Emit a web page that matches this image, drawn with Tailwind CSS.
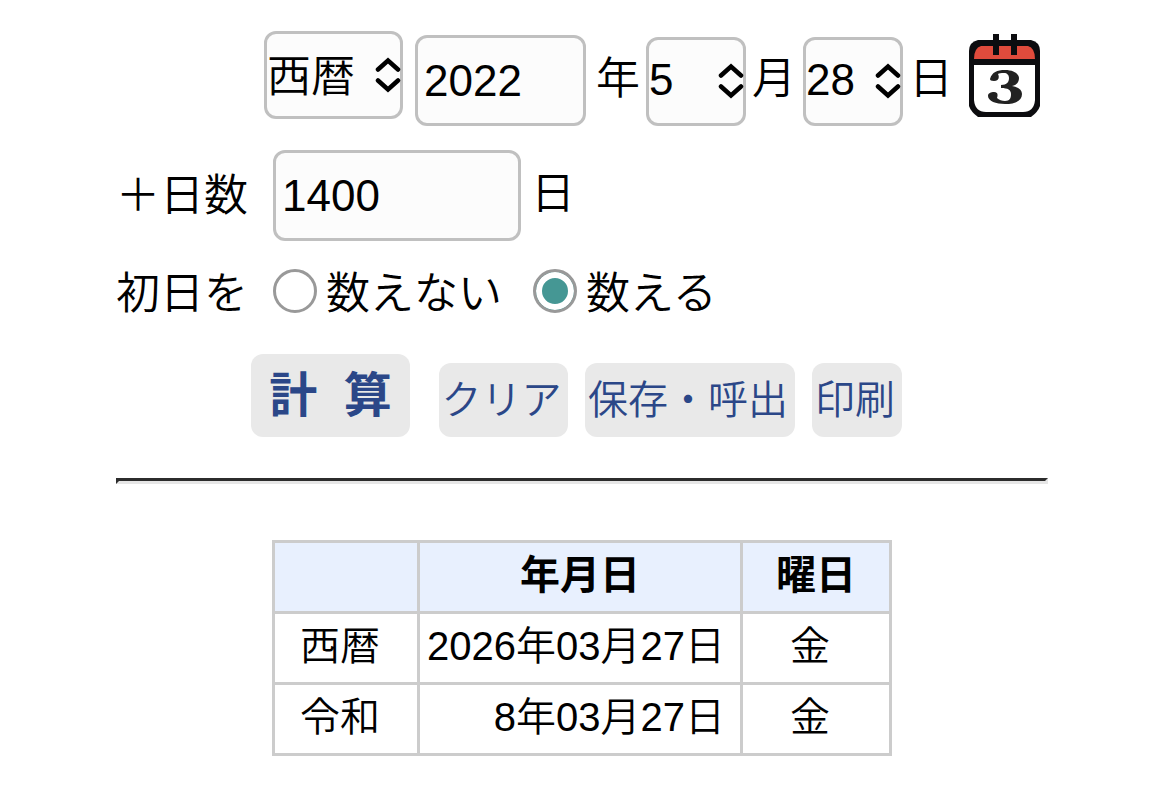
<!DOCTYPE html>
<html lang="ja">
<head>
<meta charset="utf-8">
<title>日付計算</title>
<script src="https://cdn.jsdelivr.net/npm/@tailwindcss/browser@4"></script>
</head>
<body class="bg-white font-['Liberation_Sans','Noto_Sans_CJK_JP',sans-serif] font-[350] text-black">
<main class="pt-[31px] pr-[122px] pb-12 pl-[116px]">
<form class="text-[44px] leading-[88px]">
  <div class="flex items-start pl-[148px]">
    <div class="relative">
      <select aria-label="暦" class="block h-[88px] w-[139px] appearance-none rounded-xl border-3 border-[#c0c0c0] bg-[#fcfcfc] pt-1 leading-[60px]"><option>西暦</option></select>
      <svg class="pointer-events-none absolute top-[26px] right-0.5" width="26" height="36" viewBox="0 0 26 36" fill="none" stroke="#000" stroke-width="4.500" stroke-linecap="round" stroke-linejoin="miter"><path d="M3 12.500 13 3.500 23 12.500M3 23.500 13 32.500 23 23.500"/></svg>
    </div>
    <input type="text" aria-label="年" value="2022" class="mt-1 ml-3 block h-[91px] w-[171px] rounded-xl border-3 border-[#c0c0c0] bg-[#fcfcfc] px-1.5">
    <span class="mt-1 ml-2.5 w-12">年</span>
    <div class="relative mt-1.5 ml-0.5">
      <select aria-label="月" class="block h-[89px] w-[100px] appearance-none rounded-xl border-3 border-[#c0c0c0] bg-[#fcfcfc] pb-1 leading-[60px]"><option>5</option></select>
      <svg class="pointer-events-none absolute top-[26px] right-0.5" width="26" height="36" viewBox="0 0 26 36" fill="none" stroke="#000" stroke-width="4.500" stroke-linecap="round" stroke-linejoin="miter"><path d="M3 12.500 13 3.500 23 12.500M3 23.500 13 32.500 23 23.500"/></svg>
    </div>
    <span class="mt-1 ml-1.5 w-[49px]">月</span>
    <div class="relative mt-1.5 ml-0.5">
      <select aria-label="日" class="block h-[89px] w-[100px] appearance-none rounded-xl border-3 border-[#c0c0c0] bg-[#fcfcfc] pb-1 leading-[60px]"><option>28</option></select>
      <svg class="pointer-events-none absolute top-[26px] right-0.5" width="26" height="36" viewBox="0 0 26 36" fill="none" stroke="#000" stroke-width="4.500" stroke-linecap="round" stroke-linejoin="miter"><path d="M3 12.500 13 3.500 23 12.500M3 23.500 13 32.500 23 23.500"/></svg>
    </div>
    <span class="mt-1 ml-1.5 w-[50px]">日</span>
    <button type="button" aria-label="カレンダー" class="mt-[3px] ml-2.5">
      <svg class="block" width="72" height="84" viewBox="0 0 72 84">
        <path d="M9 6H62Q71 8 71 17V72Q69 78 62 83H9Q2 78 0 72V17Q0 8 9 6Z" fill="#0c0c0f"/>
        <path d="M12 12H59Q66 14 66 25H5Q5 14 12 12Z" fill="#e04b3c"/>
        <path d="M5 31H66V66Q65 78 54 78H17Q6 78 5 66Z" fill="#fff"/>
        <path d="M24 0H30V21H24ZM42 0H48V21H42Z" fill="#0c0c0f"/>
        <path d="M21 45C23 38 28 36 36 36C45 36 50 40 50 44C50 49 47 51 43 52C49 53 53 56 53 60C53 67 46 70 36 70C27 70 19 67 19 62C19 59 22 58 25 58C29 58 29 61 28 64C30 66 33 67 36 67C41 67 42 64 42 60C42 56 39 54 32 54V51C38 51 40 48 40 44C40 41 38 39 35 39C32 39 30 39 29 40C31 44 29 47 25 47C22 47 21 46 21 45Z" fill="#222"/>
      </svg>
    </button>
  </div>

  <div class="mt-6 flex items-start">
    <label for="days" class="mt-0.5 w-[157px]">＋日数</label>
    <input id="days" type="text" value="1400" class="block h-[91px] w-[248px] rounded-xl border-3 border-[#c0c0c0] bg-[#fcfcfc] px-1.5">
    <span class="ml-2.5">日</span>
  </div>

  <fieldset class="mt-[13px] flex items-center leading-[68px]">
    <span class="w-[157px] pt-1.5">初日を</span>
    <label class="flex items-center gap-[9px]"><input type="radio" name="first" class="size-11 appearance-none rounded-full border-3 border-[#999] bg-white"><span class="pt-1.5">数えない</span></label>
    <label class="ml-[31px] flex items-center gap-[9px]"><input type="radio" name="first" checked class="size-11 appearance-none rounded-full border-3 border-[#999] bg-white checked:bg-[#459794] checked:shadow-[inset_0_0_0_6px_white]"><span class="pt-1.5">数える</span></label>
  </fieldset>

  <div class="mt-[26px] flex items-end pl-[135px] text-[40px] leading-[74px] text-[#2b4788]">
    <button type="button" class="h-[83px] w-[159px] rounded-xl bg-[#e9e9e9] text-[48px] leading-[83px] font-bold whitespace-nowrap">計&nbsp;&nbsp;算</button>
    <button type="button" class="ml-[29px] h-[74px] w-[129px] rounded-xl bg-[#e9e9e9] pr-1">クリア</button>
    <button type="button" class="ml-[17px] h-[74px] w-[210px] rounded-xl bg-[#e9e9e9] pr-1">保存・呼出</button>
    <button type="button" class="ml-[17px] h-[74px] w-[90px] rounded-xl bg-[#e9e9e9] pr-1">印刷</button>
  </div>
</form>

<hr class="mt-[41px] h-1.5 border-3 border-t-[#2c2c2c] border-r-[#e6e6e6] border-b-[#e6e6e6] border-l-[#2c2c2c]">

<table class="mt-14 ml-[156px] table-fixed border-collapse text-[40px] leading-[60px]">
  <colgroup><col class="w-[145px]"><col class="w-[323px]"><col class="w-[149px]"></colgroup>
  <thead>
    <tr class="h-[71px] bg-[#e8f0fe]">
      <td class="border-3 border-[#ccc]"></td>
      <th scope="col" class="border-3 border-[#ccc] pb-1 font-bold">年月日</th>
      <th scope="col" class="border-3 border-[#ccc] pb-1 font-bold">曜日</th>
    </tr>
  </thead>
  <tbody>
    <tr class="h-[71px]">
      <th scope="row" class="border-3 border-[#ccc] pr-3 pb-1 font-[350]">西暦</th>
      <td class="border-3 border-[#ccc] pr-[15px] pb-1 text-right whitespace-nowrap">2026年03月27日</td>
      <td class="border-3 border-[#ccc] pr-3 pb-1 text-center">金</td>
    </tr>
    <tr class="h-[71px]">
      <th scope="row" class="border-3 border-[#ccc] pr-3 pb-1 font-[350]">令和</th>
      <td class="border-3 border-[#ccc] pr-[15px] pb-1 text-right whitespace-nowrap">8年03月27日</td>
      <td class="border-3 border-[#ccc] pr-3 pb-1 text-center">金</td>
    </tr>
  </tbody>
</table>
</main>
</body>
</html>
